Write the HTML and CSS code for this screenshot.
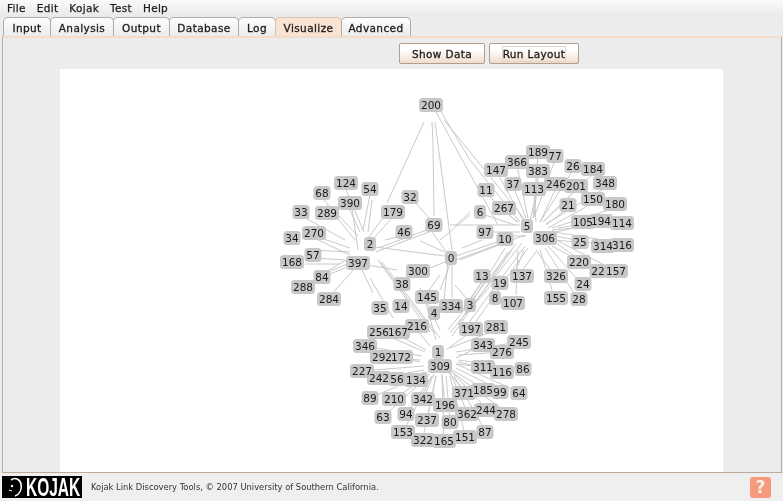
FILE: index.html
```html
<!DOCTYPE html>
<html lang="en">
<head>
<meta charset="utf-8">
<title>Kojak Link Discovery Tools</title>
<link rel="stylesheet" href="styles.css">
</head>
<body>
<nav class="menu"><span>File</span><span>Edit</span><span>Kojak</span><span>Test</span><span>Help</span></nav>
<div class="tabs">
  <span class="tab t-input">Input</span>
  <span class="tab t-analysis">Analysis</span>
  <span class="tab t-output">Output</span>
  <span class="tab t-database">Database</span>
  <span class="tab t-log">Log</span>
  <span class="tab t-vis active">Visualize</span>
  <span class="tab t-adv">Advanced</span>
</div>
<main class="panel">
  <div class="toolbar">
    <button class="btn btn-show">Show Data</button>
    <button class="btn btn-run"><span class="focus">Run Layout</span></button>
  </div>
  <div class="canvas">
    <svg class="graph" viewBox="60 69 663 403" width="663" height="403">
      <path class="edges" d="M424 122L387 203M432 122L433 143L434 216M435 122L452 250M436 112L498 225M444 120L527 222M440 110L470 160M470 160L520 222
      M346 190L364 232M350 210L360 232M370 195L363 230M372 200L368 232M323 199L358 236M327 205L355 240M302 216L345 240M315 236L350 248M318 240L350 255M313 250L350 252M315 258L345 260M305 264L340 264M322 274L350 258M328 272L352 262M305 284L345 268M330 296L355 268M352 208L358 250M385 215L368 238M392 218L372 240M405 235L385 240M432 228L378 248M434 230L376 252M375 247L445 256
      M367 265L397 270M362 270L373 293M370 278L393 318M378 260L430 332M380 262L435 334M382 262L440 338M425 270L445 262M420 241L445 252M413 200L431 220M451 262L440 290M448 262L444 300M452 264L452 298M440 275L422 300M420 288L440 330M425 300L436 340M455 285L468 300M470 300L482 282M461 312L490 270M466 314L500 275
      M456 256L500 241M456 260L502 243M460 260L525 235M448 254L432 232M450 225L520 225M455 226L470 212M440 240L470 215M462 248L482 240M487 194L517 222M505 212L518 222M482 214L515 225M487 232L520 232M508 236L526 236M497 172L524 222M517 166L528 218M538 155L533 218M538 176L534 218M514 188L526 218M534 192L536 222M537 192L530 220M556 188L540 222M555 160L535 215M573 170L540 222M576 190L543 222M593 174L543 222M605 188L546 224M568 208L546 225M593 203L548 228M615 208L552 228M583 224L558 228M600 222L556 232M622 224L552 230M555 240L575 242M555 236L603 245M554 232L622 243M540 250L552 290M536 250L552 272M545 248L574 293M548 246L578 280M552 246L574 258M556 243L592 268M558 241L610 268M522 243L450 333M516 244L448 330M512 250L452 336M525 246L462 332M528 248L470 330M518 250L516 295M524 250L516 270M536 252L521 272M508 252L490 280M505 248L458 325
      M379 332L425 352M398 335L426 350M417 330L430 346M365 346L422 356M382 357L420 360M401 357L420 362M362 371L424 366M379 378L424 370M397 379L426 372M416 380L428 372M370 398L426 374M394 399L430 374M423 399L434 374M445 405L442 374M450 420L446 376M427 420L436 376M403 432L432 376M406 414L432 376M383 417L428 376M423 438L436 376M444 438L442 376M465 435L450 376M485 430L454 376M467 412L450 372M464 390L448 372M483 388L452 370M500 390L456 368M519 392L456 364M506 412L452 372M486 408L452 372M483 367L456 364M502 372L458 362M523 369L458 360M483 345L456 358M502 352L458 355M519 342L456 352M471 332L446 350M496 330L450 348"/>
      <g class="n3" transform="translate(431 105)"><rect/><text>200</text></g>
      <g class="n3" transform="translate(346 183)"><rect/><text>124</text></g>
      <g class="n2" transform="translate(370 189)"><rect/><text>54</text></g>
      <g class="n2" transform="translate(322 193)"><rect/><text>68</text></g>
      <g class="n2" transform="translate(410 197)"><rect/><text>32</text></g>
      <g class="n3" transform="translate(350 203)"><rect/><text>390</text></g>
      <g class="n2" transform="translate(301 212)"><rect/><text>33</text></g>
      <g class="n3" transform="translate(327 213)"><rect/><text>289</text></g>
      <g class="n3" transform="translate(393 212)"><rect/><text>179</text></g>
      <g class="n2" transform="translate(434 225)"><rect/><text>69</text></g>
      <g class="n2" transform="translate(404 232)"><rect/><text>46</text></g>
      <g class="n3" transform="translate(314 233)"><rect/><text>270</text></g>
      <g class="n2" transform="translate(292 238)"><rect/><text>34</text></g>
      <g class="n1" transform="translate(370 244)"><rect/><text>2</text></g>
      <g class="n2" transform="translate(313 255)"><rect/><text>57</text></g>
      <g class="n3" transform="translate(292 262)"><rect/><text>168</text></g>
      <g class="n3" transform="translate(358 263)"><rect/><text>397</text></g>
      <g class="n1" transform="translate(451 258)"><rect/><text>0</text></g>
      <g class="n3" transform="translate(418 271)"><rect/><text>300</text></g>
      <g class="n2" transform="translate(322 277)"><rect/><text>84</text></g>
      <g class="n2" transform="translate(402 284)"><rect/><text>38</text></g>
      <g class="n3" transform="translate(303 287)"><rect/><text>288</text></g>
      <g class="n3" transform="translate(427 297)"><rect/><text>145</text></g>
      <g class="n3" transform="translate(329 299)"><rect/><text>284</text></g>
      <g class="n2" transform="translate(380 308)"><rect/><text>35</text></g>
      <g class="n2" transform="translate(401 306)"><rect/><text>14</text></g>
      <g class="n3" transform="translate(451 306)"><rect/><text>334</text></g>
      <g class="n1" transform="translate(434 313)"><rect/><text>4</text></g>
      <g class="n1" transform="translate(470 305)"><rect/><text>3</text></g>
      <g class="n3" transform="translate(538 152)"><rect/><text>189</text></g>
      <g class="n2" transform="translate(555 156)"><rect/><text>77</text></g>
      <g class="n3" transform="translate(517 162)"><rect/><text>366</text></g>
      <g class="n3" transform="translate(496 170)"><rect/><text>147</text></g>
      <g class="n3" transform="translate(538 171)"><rect/><text>383</text></g>
      <g class="n2" transform="translate(573 166)"><rect/><text>26</text></g>
      <g class="n3" transform="translate(593 169)"><rect/><text>184</text></g>
      <g class="n2" transform="translate(513 184)"><rect/><text>37</text></g>
      <g class="n3" transform="translate(534 189)"><rect/><text>113</text></g>
      <g class="n3" transform="translate(556 184)"><rect/><text>246</text></g>
      <g class="n3" transform="translate(576 186)"><rect/><text>201</text></g>
      <g class="n3" transform="translate(605 183)"><rect/><text>348</text></g>
      <g class="n2" transform="translate(486 190)"><rect/><text>11</text></g>
      <g class="n3" transform="translate(593 199)"><rect/><text>150</text></g>
      <g class="n3" transform="translate(615 204)"><rect/><text>180</text></g>
      <g class="n2" transform="translate(568 205)"><rect/><text>21</text></g>
      <g class="n3" transform="translate(504 208)"><rect/><text>267</text></g>
      <g class="n1" transform="translate(480 212)"><rect/><text>6</text></g>
      <g class="n3" transform="translate(583 222)"><rect/><text>105</text></g>
      <g class="n3" transform="translate(601 221)"><rect/><text>194</text></g>
      <g class="n3" transform="translate(622 223)"><rect/><text>114</text></g>
      <g class="n1" transform="translate(527 226)"><rect/><text>5</text></g>
      <g class="n2" transform="translate(485 232)"><rect/><text>97</text></g>
      <g class="n2" transform="translate(505 239)"><rect/><text>10</text></g>
      <g class="n3" transform="translate(545 238)"><rect/><text>306</text></g>
      <g class="n2" transform="translate(580 242)"><rect/><text>25</text></g>
      <g class="n3" transform="translate(603 246)"><rect/><text>314</text></g>
      <g class="n3" transform="translate(622 245)"><rect/><text>316</text></g>
      <g class="n3" transform="translate(579 262)"><rect/><text>220</text></g>
      <g class="n2" transform="translate(598 271)"><rect/><text>22</text></g>
      <g class="n3" transform="translate(616 271)"><rect/><text>157</text></g>
      <g class="n3" transform="translate(556 276)"><rect/><text>326</text></g>
      <g class="n2" transform="translate(583 284)"><rect/><text>24</text></g>
      <g class="n3" transform="translate(556 298)"><rect/><text>155</text></g>
      <g class="n2" transform="translate(579 299)"><rect/><text>28</text></g>
      <g class="n2" transform="translate(482 276)"><rect/><text>13</text></g>
      <g class="n2" transform="translate(500 283)"><rect/><text>19</text></g>
      <g class="n3" transform="translate(522 276)"><rect/><text>137</text></g>
      <g class="n1" transform="translate(495 298)"><rect/><text>8</text></g>
      <g class="n3" transform="translate(513 303)"><rect/><text>107</text></g>
      <g class="n3" transform="translate(471 329)"><rect/><text>197</text></g>
      <g class="n3" transform="translate(496 327)"><rect/><text>281</text></g>
      <g class="n3" transform="translate(379 332)"><rect/><text>256</text></g>
      <g class="n3" transform="translate(398 332)"><rect/><text>167</text></g>
      <g class="n3" transform="translate(417 326)"><rect/><text>216</text></g>
      <g class="n3" transform="translate(483 345)"><rect/><text>343</text></g>
      <g class="n3" transform="translate(519 342)"><rect/><text>245</text></g>
      <g class="n3" transform="translate(502 352)"><rect/><text>276</text></g>
      <g class="n3" transform="translate(365 346)"><rect/><text>346</text></g>
      <g class="n3" transform="translate(382 357)"><rect/><text>292</text></g>
      <g class="n3" transform="translate(401 357)"><rect/><text>172</text></g>
      <g class="n1" transform="translate(438 352)"><rect/><text>1</text></g>
      <g class="n3" transform="translate(440 366)"><rect/><text>309</text></g>
      <g class="n3" transform="translate(483 367)"><rect/><text>311</text></g>
      <g class="n3" transform="translate(502 372)"><rect/><text>116</text></g>
      <g class="n2" transform="translate(523 369)"><rect/><text>86</text></g>
      <g class="n3" transform="translate(362 371)"><rect/><text>227</text></g>
      <g class="n3" transform="translate(379 378)"><rect/><text>242</text></g>
      <g class="n2" transform="translate(397 379)"><rect/><text>56</text></g>
      <g class="n3" transform="translate(416 380)"><rect/><text>134</text></g>
      <g class="n3" transform="translate(464 393)"><rect/><text>371</text></g>
      <g class="n3" transform="translate(483 390)"><rect/><text>185</text></g>
      <g class="n2" transform="translate(500 392)"><rect/><text>99</text></g>
      <g class="n2" transform="translate(519 393)"><rect/><text>64</text></g>
      <g class="n2" transform="translate(370 398)"><rect/><text>89</text></g>
      <g class="n3" transform="translate(394 399)"><rect/><text>210</text></g>
      <g class="n3" transform="translate(423 399)"><rect/><text>342</text></g>
      <g class="n3" transform="translate(445 405)"><rect/><text>196</text></g>
      <g class="n3" transform="translate(467 414)"><rect/><text>362</text></g>
      <g class="n3" transform="translate(486 410)"><rect/><text>244</text></g>
      <g class="n3" transform="translate(506 414)"><rect/><text>278</text></g>
      <g class="n2" transform="translate(383 417)"><rect/><text>63</text></g>
      <g class="n2" transform="translate(406 414)"><rect/><text>94</text></g>
      <g class="n3" transform="translate(427 420)"><rect/><text>237</text></g>
      <g class="n2" transform="translate(450 422)"><rect/><text>80</text></g>
      <g class="n3" transform="translate(403 432)"><rect/><text>153</text></g>
      <g class="n2" transform="translate(485 432)"><rect/><text>87</text></g>
      <g class="n3" transform="translate(465 437)"><rect/><text>151</text></g>
      <g class="n3" transform="translate(423 440)"><rect/><text>322</text></g>
      <g class="n3" transform="translate(444 441)"><rect/><text>165</text></g>
    </svg>
  </div>
</main>
<footer class="footer">
  <div class="logo">
    <svg class="face" viewBox="0 0 18 22" width="18" height="22"><path d="M5 4C9 1 14 3 15 8C16 13 14 18 9 20" fill="none" stroke="#fff" stroke-width="1.6"/><circle cx="6" cy="10" r="1.2" fill="#fff"/><path d="M3 14L6 15" stroke="#fff"/></svg>
    <span class="logo-text">KOJAK</span>
  </div>
  <span class="credit">Kojak Link Discovery Tools, © 2007 University of Southern California.</span>
  <span class="help">?</span>
</footer>
</body>
</html>
```
FILE: styles.css
```css
* { box-sizing: border-box; }
html, body { margin: 0; height: 501px; width: 783px; overflow: hidden; }
body {
  display: flex;
  flex-direction: column;
  background: #ececec;
  color: #1c1c1c;
  font-family: "DejaVu Sans", sans-serif;
  font-size: 10.5px;
  filter: blur(0.35px);
}
.menu {
  height: 17px;
  display: flex;
  align-items: center;
  gap: 11px;
  padding: 0 0 2px 7px;
  background: linear-gradient(#fafafa, #e9e9e9);
  font-size: 10.5px;
  letter-spacing: 0.3px;
  -webkit-text-stroke: 0.25px #1c1c1c;
}
.tabs {
  height: 19px;
  display: flex;
  padding-left: 3px;
  flex: none;
}
.tab {
  display: flex;
  align-items: center;
  justify-content: center;
  border: 1px solid #b4aba2;
  border-bottom: 0;
  border-radius: 5px 5px 0 0;
  margin-right: -1px;
  background: linear-gradient(#fdfdfd, #ececec);
  letter-spacing: 0.4px;
  -webkit-text-stroke: 0.3px #1c1c1c;
  padding-top: 1px;
}
.t-input { width: 48px; }
.t-analysis { width: 64px; }
.t-output { width: 57px; }
.t-database { width: 70px; }
.t-log { width: 38px; }
.t-vis { width: 67px; }
.t-adv { width: 70px; }
.tab.active { background: #f9e3d2; border-color: #d8c4b3; }
.panel {
  height: 437px;
  margin: 0 1px 0 2px;
  border: 1px solid #bcaa9b;
  border-top: 2px solid #f3dcca;
  display: flex;
  flex-direction: column;
  background: #ececec;
}
.toolbar {
  height: 31px;
  display: flex;
  flex: none;
  gap: 4px;
  padding: 5px 0 0 396px;
}
.btn {
  height: 21px;
  border: 1px solid #b09f91;
  border-radius: 2px;
  background: linear-gradient(#ffffff 30%, #f0dccb);
  color: #1c1c1c;
  font: 10.5px "DejaVu Sans", sans-serif;
  letter-spacing: 0.35px;
  -webkit-text-stroke: 0.3px #1c1c1c;
  padding: 0;
}
.btn-show { width: 86px; }
.btn-run { width: 90px; }
.focus { border: 1px solid #e3d5c8; padding: 1px 0; }
.canvas {
  flex: 1;
  margin: 0 58px 0 57px;
  background: #fff;
}
.graph { display: block; }
.edges { fill: none; stroke: #c9c9c9; stroke-width: 1; }
.graph g { mix-blend-mode: darken; }
.graph rect { y: -7px; height: 14px; rx: 3.5px; ry: 3.5px; fill: #c8c8c8; }
.n1 rect { x: -6px; width: 12px; }
.n2 rect { x: -8.5px; width: 17px; }
.n3 rect { x: -12px; width: 24px; }
.graph text {
  font: 10.5px "DejaVu Sans", sans-serif;
  fill: #1a1a1a;
  text-anchor: middle;
  dominant-baseline: central;
}
.footer {
  flex: 1;
  display: flex;
  align-items: center;
  padding: 2px 12px 2px 2px;
  background: #efefef;
}
.logo {
  width: 80px;
  height: 22px;
  background: #000;
  display: flex;
  align-items: center;
}
.face { flex: none; margin-left: 4px; }
.logo-text {
  color: #fff;
  font: bold 25px "Liberation Sans", sans-serif;
  display: inline-block;
  transform: scaleX(0.62);
  transform-origin: left center;
  white-space: nowrap;
  margin-left: 2px;
  margin-right: -40px;
}
.credit {
  margin-left: 9px;
  font-size: 8.35px;
  color: #333;
}
.help {
  margin-left: auto;
  width: 21px;
  height: 21px;
  border-radius: 3px;
  background: #f59a7e;
  color: #fdeee6;
  font: bold 17px "DejaVu Sans", sans-serif;
  display: flex;
  align-items: center;
  justify-content: center;
}
```
